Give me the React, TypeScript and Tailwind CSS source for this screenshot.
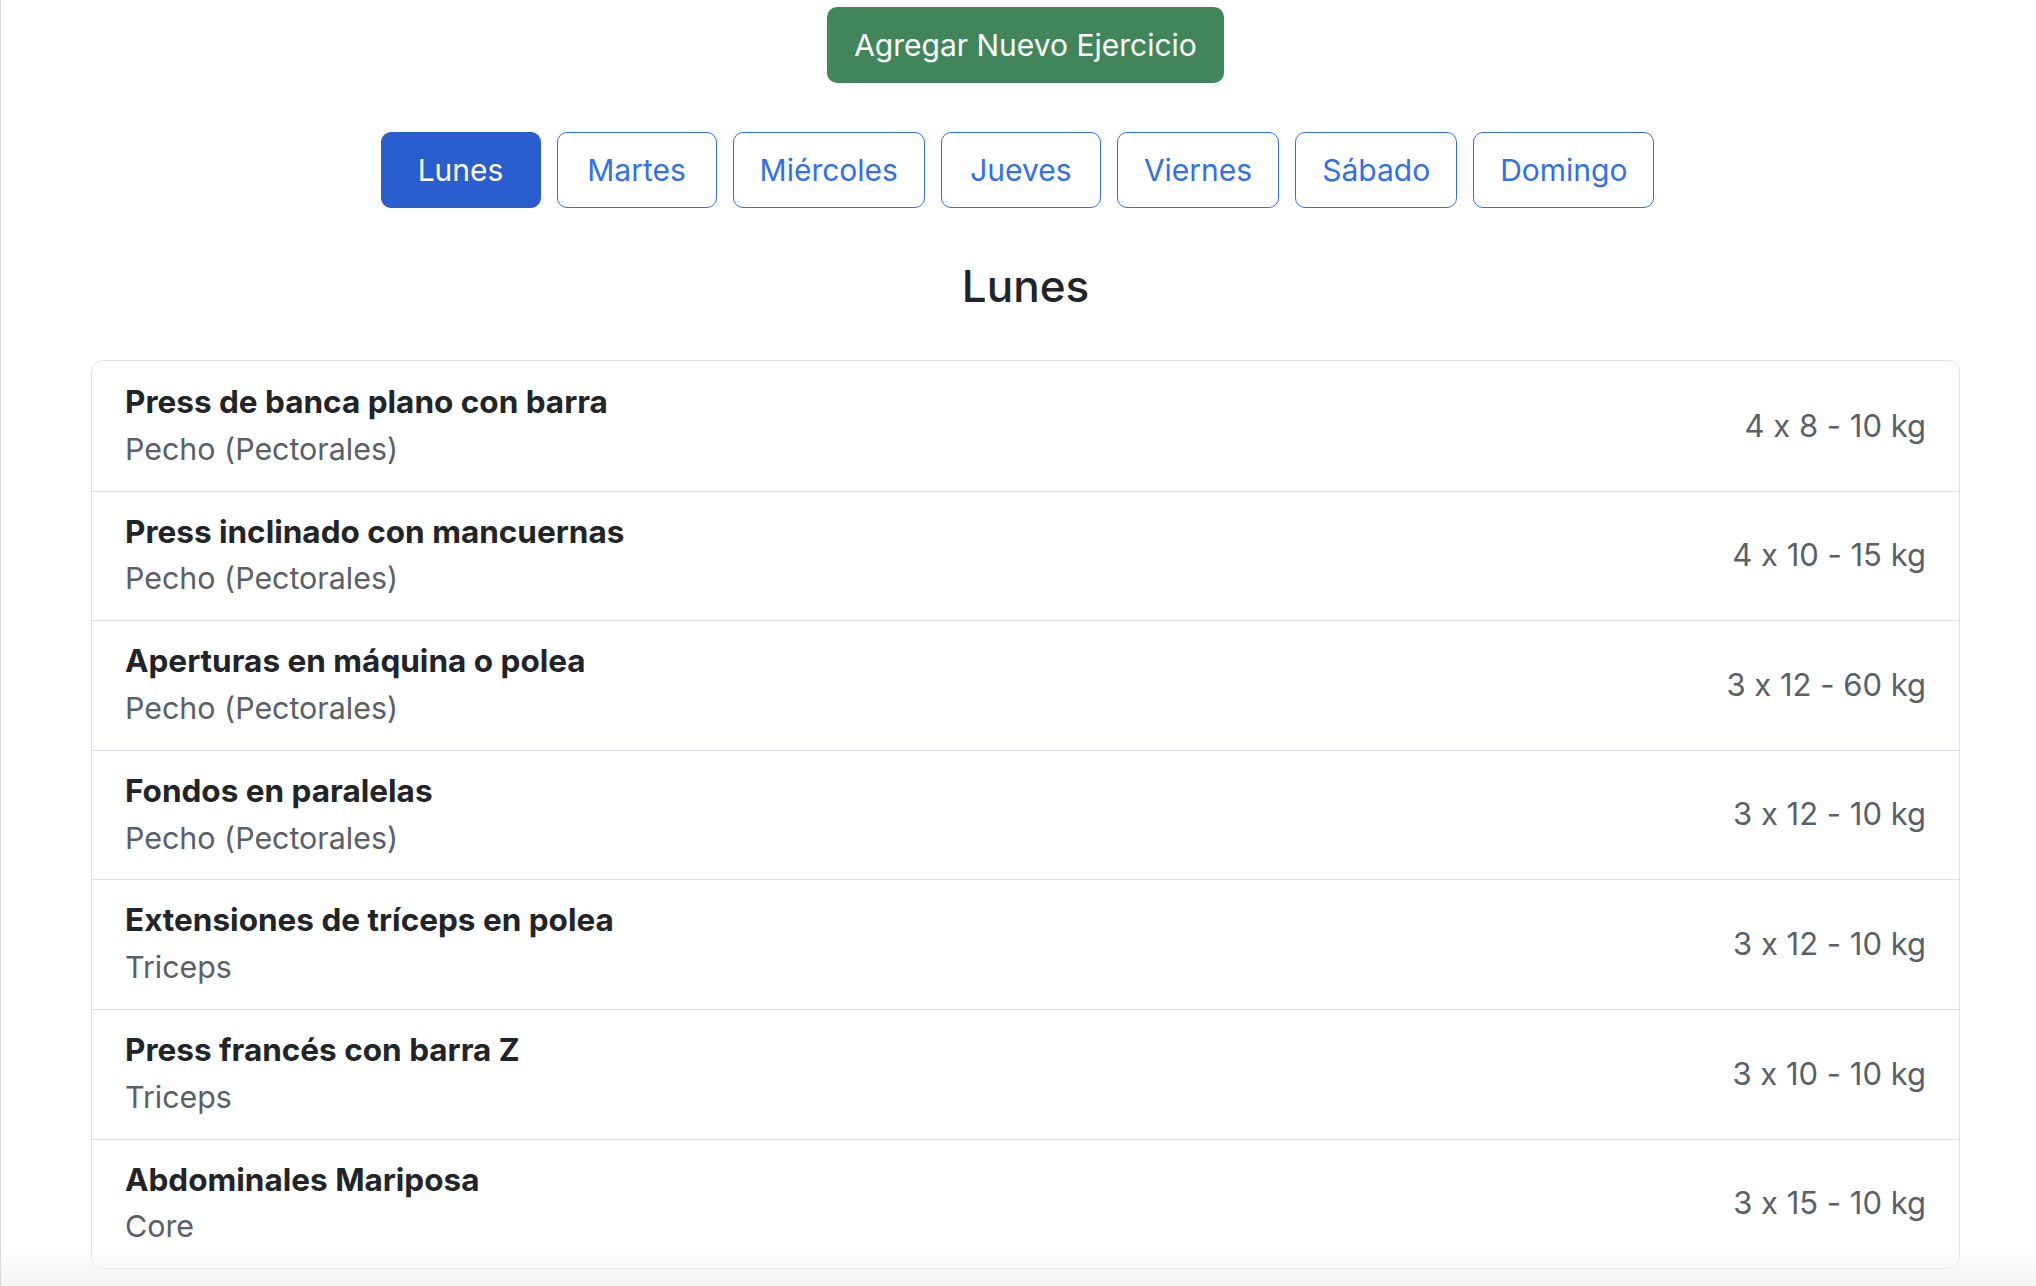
import { useState } from "react";

type Exercise = {
  id: number;
  name: string;
  muscle: string;
  detail: string;
};

const days = ["Lunes", "Martes", "Miércoles", "Jueves", "Viernes", "Sábado", "Domingo"];

const mondayExercises: Exercise[] = [
  { id: 1, name: "Press de banca plano con barra", muscle: "Pecho (Pectorales)", detail: "4 x 8 - 10 kg" },
  { id: 2, name: "Press inclinado con mancuernas", muscle: "Pecho (Pectorales)", detail: "4 x 10 - 15 kg" },
  { id: 3, name: "Aperturas en máquina o polea", muscle: "Pecho (Pectorales)", detail: "3 x 12 - 60 kg" },
  { id: 4, name: "Fondos en paralelas", muscle: "Pecho (Pectorales)", detail: "3 x 12 - 10 kg" },
  { id: 5, name: "Extensiones de tríceps en polea", muscle: "Triceps", detail: "3 x 12 - 10 kg" },
  { id: 6, name: "Press francés con barra Z", muscle: "Triceps", detail: "3 x 10 - 10 kg" },
  { id: 7, name: "Abdominales Mariposa", muscle: "Core", detail: "3 x 15 - 10 kg" },
];

export default function App() {
  const [selectedDay, setSelectedDay] = useState("Lunes");

  return (
    <div className="relative min-h-screen overflow-hidden border-l border-[#d9d9d9] bg-white font-['Inter',sans-serif] text-[#212529] [font-feature-settings:'calt'_0]">
      <div className="pl-[90px] pr-[76px] pt-[7px] pb-[20px]">
        <div className="flex justify-center">
          <button className="flex h-[76px] items-center rounded-[10px] bg-[#40865a] px-[27px] text-[30px] text-white">
            Agregar Nuevo Ejercicio
          </button>
        </div>

        <div className="mt-[49px] flex justify-center">
          {days.map((day) => (
            <button
              key={day}
              onClick={() => setSelectedDay(day)}
              className={
                day === selectedDay
                  ? "mr-[16px] flex h-[76px] min-w-[160px] items-center justify-center rounded-[10px] border-[1.5px] border-[#2a5dcd] bg-[#2a5dcd] px-[26px] text-[30px] text-white"
                  : "mr-[16px] flex h-[76px] min-w-[160px] items-center justify-center rounded-[10px] border-[1.5px] border-[#326ef0] bg-white px-[26px] text-[30px] text-[#326ef0]"
              }
            >
              {day}
            </button>
          ))}
        </div>

        <h3 className="mt-[52px] text-center text-[44px] font-medium leading-[53px]">{selectedDay}</h3>

        <ul className="mt-[47px] overflow-hidden rounded-[12px] border border-[#dee2e6]">
          {mondayExercises.map((ex, i) => (
            <li
              key={ex.id}
              className={
                i === 0
                  ? "flex items-center justify-between pl-[33px] pr-[33px] pt-[17px] pb-[17px]"
                  : "flex items-center justify-between border-t border-[#dee2e6] pl-[33px] pr-[33px] pt-[16px] pb-[17px]"
              }
            >
              <div className="leading-[47.8px]">
                <div className="text-[31.5px] font-bold">{ex.name}</div>
                <div className="text-[30.4px] text-[#5a6067]">{ex.muscle}</div>
              </div>
              <span className="text-[31px] text-[#5a6067]">{ex.detail}</span>
            </li>
          ))}
        </ul>
      </div>
      <div className="pointer-events-none absolute bottom-0 left-0 right-0 h-[44px] bg-gradient-to-b from-transparent to-[#f3f3f3]" />
    </div>
  );
}
